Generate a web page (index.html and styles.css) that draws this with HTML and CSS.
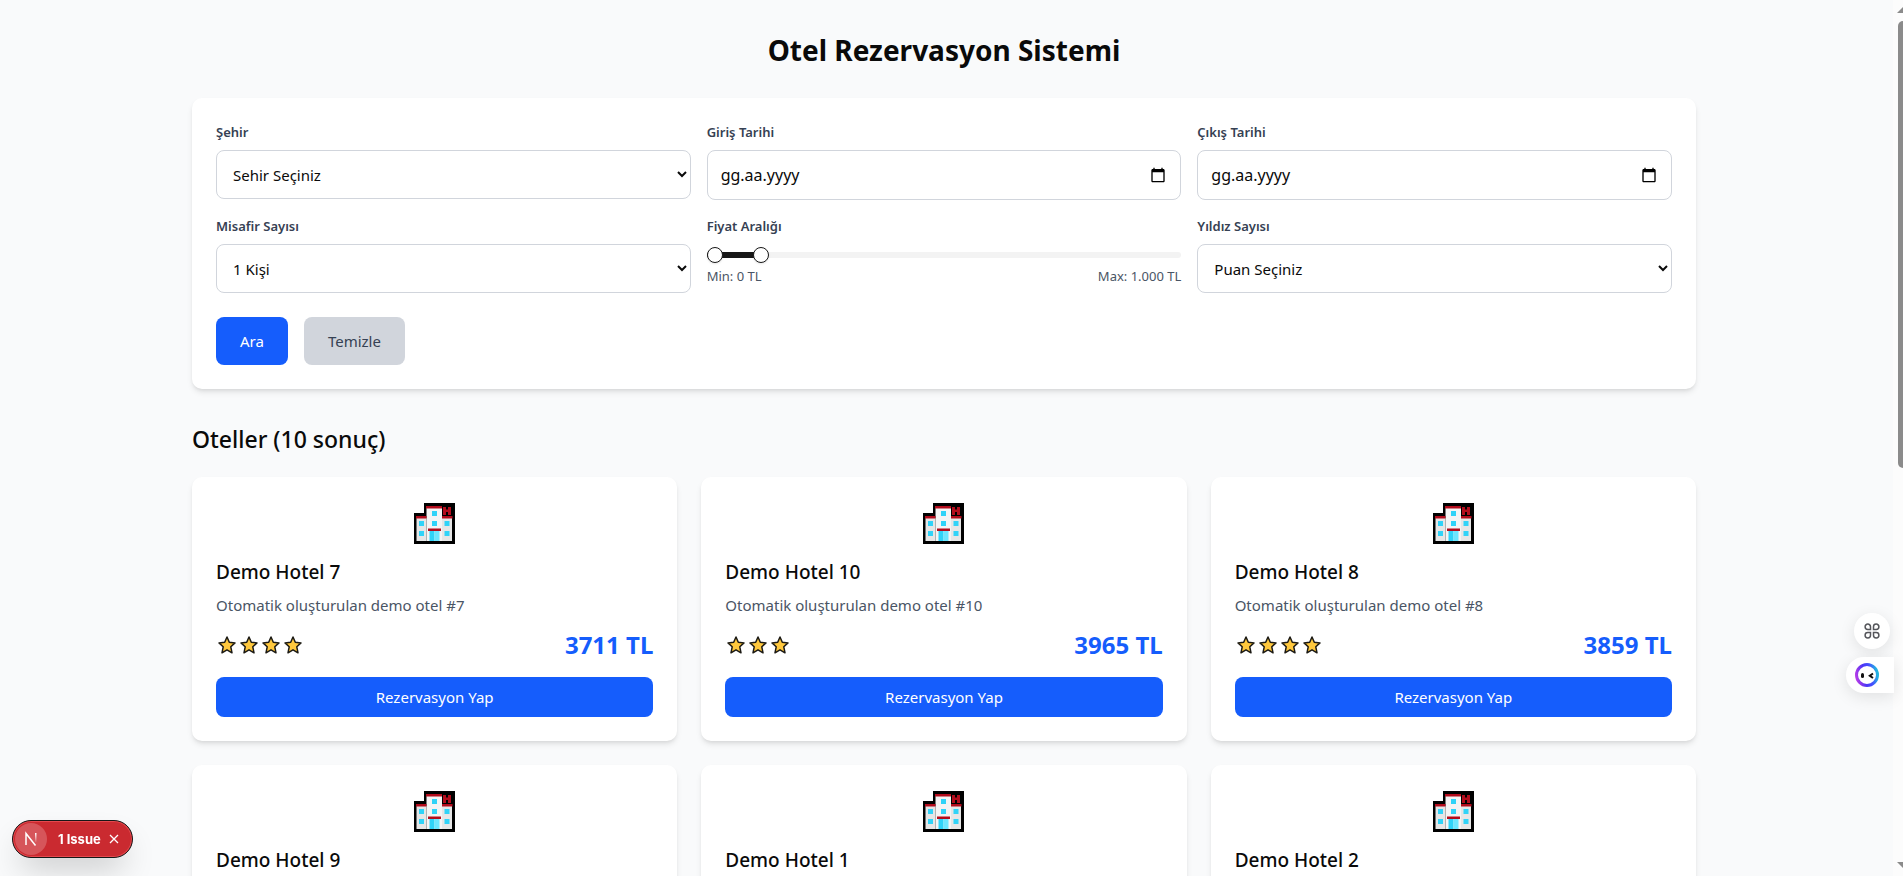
FILE: index.html
```html
<!DOCTYPE html>
<html lang="tr">
<head>
<meta charset="utf-8">
<title>Otel Rezervasyon Sistemi</title>
<link rel="stylesheet" href="styles.css">
</head>
<body>
<svg class="sprite" aria-hidden="true">
  <symbol id="hotel" viewBox="0 0 41 41">
    <path fill="#000" d="M0 10h10V0h31v41H0z"/>
    <path fill="#e6e6e6" d="M2.500 15h10v23h-10zM28 15h10v23H28z"/>
    <path fill="#f4f4f4" d="M12.500 5H28v33H12.500z"/>
    <path fill="#b30c1c" d="M12 3h16v2.500H12zM2 13h10.500v2.500H2zM28 13h10.500v2.500H28zM14 25.500h13v2.500H14zM29 4h3v2.500h2V4h3v8h-3V9h-2v3h-3z"/>
    <path fill="#30d3f8" d="M18 8h5v5h-5zM18 18h5v5h-5zM5 18h5v5H5zM5 28h5v5H5zM30.500 18h5v5h-5zM30.500 28h5v5h-5zM15.500 28h5v10h-5z"/>
    <path fill="#6ce6ff" d="M20.500 28h5v10h-5z"/>
  </symbol>
  <symbol id="star" viewBox="0 0 22 22">
    <path fill="#ffc83d" stroke="#1c1a14" stroke-width="1.500" stroke-linejoin="round" d="M11 3l2.300 5.300 5.700.6-4.200 3.900 1.200 6-5-3-5 3 1.200-6L3 8.900l5.700-.6z"/>
  </symbol>
</svg>
<div class="shell">
<main class="page">
  <h1 class="title">Otel Rezervasyon Sistemi</h1>
  <form class="search">
    <div class="fields">
      <div class="field">
        <label class="label" for="city">Şehir</label>
        <select class="control select" id="city"><option>Sehir Seçiniz</option></select>
      </div>
      <div class="field">
        <label class="label" for="checkin">Giriş Tarihi</label>
        <div class="control date">
          <input class="date-input" id="checkin" type="text" value="gg.aa.yyyy">
          <svg class="calendar" viewBox="0 0 24 24" aria-hidden="true"><path d="M20 3h-1V1h-2v2H7V1H5v2H4c-1.100 0-2 .9-2 2v16c0 1.100.9 2 2 2h16c1.100 0 2-.9 2-2V5c0-1.100-.9-2-2-2zm0 18H4V8h16v13z"/></svg>
        </div>
      </div>
      <div class="field">
        <label class="label" for="checkout">Çıkış Tarihi</label>
        <div class="control date">
          <input class="date-input" id="checkout" type="text" value="gg.aa.yyyy">
          <svg class="calendar" viewBox="0 0 24 24" aria-hidden="true"><path d="M20 3h-1V1h-2v2H7V1H5v2H4c-1.100 0-2 .9-2 2v16c0 1.100.9 2 2 2h16c1.100 0 2-.9 2-2V5c0-1.100-.9-2-2-2zm0 18H4V8h16v13z"/></svg>
        </div>
      </div>
      <div class="field">
        <label class="label" for="guests">Misafir Sayısı</label>
        <select class="control select" id="guests"><option>1 Kişi</option></select>
      </div>
      <div class="field">
        <label class="label" for="price-max">Fiyat Aralığı</label>
        <div class="range">
          <div class="track"><div class="fill"></div></div>
          <input class="slider" type="range" min="0" max="10000" value="0" aria-label="Min">
          <input class="slider" id="price-max" type="range" min="0" max="10000" value="1000">
        </div>
        <div class="limits"><span>Min: 0 TL</span><span>Max: 1.000 TL</span></div>
      </div>
      <div class="field">
        <label class="label" for="stars">Yıldız Sayısı</label>
        <select class="control select" id="stars"><option>Puan Seçiniz</option></select>
      </div>
    </div>
    <div class="actions">
      <button class="button primary" type="button">Ara</button>
      <button class="button muted" type="button">Temizle</button>
    </div>
  </form>
  <h2 class="subtitle">Oteller (10 sonuç)</h2>
  <div class="hotels">
    <article class="card">
      <svg class="hotel-icon"><use href="#hotel"/></svg>
      <h3 class="name">Demo Hotel 7</h3>
      <p class="about">Otomatik oluşturulan demo otel #7</p>
      <div class="meta"><span class="stars"><svg class="star"><use href="#star"/></svg><svg class="star"><use href="#star"/></svg><svg class="star"><use href="#star"/></svg><svg class="star"><use href="#star"/></svg></span><span class="price">3711 TL</span></div>
      <button class="book" type="button">Rezervasyon Yap</button>
    </article>
    <article class="card">
      <svg class="hotel-icon"><use href="#hotel"/></svg>
      <h3 class="name">Demo Hotel 10</h3>
      <p class="about">Otomatik oluşturulan demo otel #10</p>
      <div class="meta"><span class="stars"><svg class="star"><use href="#star"/></svg><svg class="star"><use href="#star"/></svg><svg class="star"><use href="#star"/></svg></span><span class="price">3965 TL</span></div>
      <button class="book" type="button">Rezervasyon Yap</button>
    </article>
    <article class="card">
      <svg class="hotel-icon"><use href="#hotel"/></svg>
      <h3 class="name">Demo Hotel 8</h3>
      <p class="about">Otomatik oluşturulan demo otel #8</p>
      <div class="meta"><span class="stars"><svg class="star"><use href="#star"/></svg><svg class="star"><use href="#star"/></svg><svg class="star"><use href="#star"/></svg><svg class="star"><use href="#star"/></svg></span><span class="price">3859 TL</span></div>
      <button class="book" type="button">Rezervasyon Yap</button>
    </article>
    <article class="card">
      <svg class="hotel-icon"><use href="#hotel"/></svg>
      <h3 class="name">Demo Hotel 9</h3>
    </article>
    <article class="card">
      <svg class="hotel-icon"><use href="#hotel"/></svg>
      <h3 class="name">Demo Hotel 1</h3>
    </article>
    <article class="card">
      <svg class="hotel-icon"><use href="#hotel"/></svg>
      <h3 class="name">Demo Hotel 2</h3>
    </article>
  </div>
</main>
<div class="scrollbar" aria-hidden="true">
  <svg class="arrow" viewBox="0 0 6 8"><path d="M0 7l6-6v6z"/></svg>
  <div class="thumb"></div>
  <svg class="arrow arrow-down" viewBox="0 0 6 8"><path d="M0 1l6 6V1z"/></svg>
</div>
</div>
<div class="issue">
  <button class="issue-logo" type="button" aria-label="Next.js">
    <svg class="issue-n" viewBox="0 0 16 16">
      <defs><linearGradient id="fade" x1="0" y1="0" x2="0" y2="1"><stop offset="0" stop-color="#fff"/><stop offset="1" stop-color="#fff" stop-opacity="0.100"/></linearGradient></defs>
      <path d="M3 14V2.500L12.500 14.500" fill="none" stroke="#fff" stroke-width="1.500"/>
      <path d="M12 2h1.500v9H12z" fill="url(#fade)"/>
    </svg>
  </button>
  <button class="issue-text" type="button">1 Issue</button>
  <button class="issue-close" type="button" aria-label="Kapat"><svg class="issue-x" viewBox="0 0 10 10"><path d="M1 1l8 8M9 1L1 9" fill="none" stroke="#fff" stroke-width="1.300"/></svg></button>
</div>
<div class="dock">
  <button class="dock-apps" type="button" aria-label="Uygulamalar">
    <svg class="apps-icon" viewBox="0 0 16 16" fill="none" stroke="#55565b" stroke-width="1.500"><path d="M6.500 6.500H3.800A2.700 2.700 0 1 1 6.500 3.800zM9.500 6.500V3.800A2.700 2.700 0 1 1 12.200 6.500zM6.500 9.500v2.700A2.700 2.700 0 1 1 3.800 9.500zM9.500 9.500h2.700A2.700 2.700 0 1 1 9.500 12.200z"/></svg>
  </button>
  <button class="dock-bot" type="button" aria-label="Asistan">
    <svg class="bot-icon" viewBox="0 0 24 24">
      <defs><linearGradient id="ring" x1="0" y1="0.700" x2="1" y2="0.500"><stop offset="0" stop-color="#b53be8"/><stop offset="0.400" stop-color="#4b35f5"/><stop offset="0.700" stop-color="#4450ff"/><stop offset="1" stop-color="#23b4e0"/></linearGradient></defs>
      <circle cx="12" cy="12" r="10.500" fill="#fff" stroke="url(#ring)" stroke-width="3"/>
      <rect x="6" y="10" width="3" height="5" rx="1.500" fill="#111"/>
      <path d="M18 10.500l-3.200 2.200L18 15" fill="none" stroke="#111" stroke-width="2"/>
    </svg>
  </button>
</div>
</body>
</html>
```
FILE: styles.css
```css
* { box-sizing: border-box; }
html, body { height: 100%; }
body {
  margin: 0;
  overflow: hidden;
  background: #f9fafb;
  color: #0a0a0a;
  font-family: "Segoe UI", "Noto Sans", sans-serif;
  font-size: 15px;
  line-height: 24px;
}
button, input, select { font: inherit; color: inherit; }
button { border: 0; padding: 0; cursor: pointer; }
h1, h2, h3, p { margin: 0; }
.sprite { position: absolute; width: 0; height: 0; }

.shell { display: flex; gap: 5px; height: 100%; overflow: hidden; }
.page { flex: 1; max-width: 1536px; margin: 0 auto; padding: 32px 16px; }
.title { margin-bottom: 30px; font-size: 28px; line-height: 36px; font-weight: 700; text-align: center; }

.search, .card {
  background: #fff;
  border-radius: 10px;
  padding: 24px;
  box-shadow: 0 4px 6px -1px rgba(0, 0, 0, .1), 0 2px 4px -2px rgba(0, 0, 0, .1);
}
.fields { display: grid; grid-template-columns: repeat(3, 1fr); gap: 16px; align-items: start; }
.field { display: flex; flex-direction: column; }
.label { margin-bottom: 8px; color: #364153; font-size: 13px; line-height: 20px; font-weight: 600; }
.control { width: 100%; border: 1px solid #d1d5dc; border-radius: 8px; background: #fff; }
.select { height: 49px; padding: 12px; }
.date { display: flex; align-items: center; height: 50px; padding: 0 14px 0 13px; }
.date-input { flex: 1; min-width: 0; border: 0; padding: 0; background: transparent; outline: 0; font-size: 16px; }
.calendar { width: 16px; height: 16px; }

.range { display: grid; align-items: center; height: 22px; }
.range > * { grid-area: 1 / 1; }
.track { height: 6px; border-radius: 3px; background: #f3f3f3; overflow: hidden; }
.fill { width: 10%; height: 100%; background: #171717; }
.slider { width: 100%; height: 16px; margin: 0; background: transparent; appearance: none; pointer-events: none; }
.slider::-webkit-slider-thumb {
  appearance: none;
  width: 16px;
  height: 16px;
  border: 1px solid #171717;
  border-radius: 50%;
  background: #fff;
  box-shadow: 0 1px 2px rgba(0, 0, 0, .1);
  pointer-events: auto;
}
.limits { display: flex; justify-content: space-between; color: #4a5565; font-size: 13px; line-height: 20px; }

.actions { display: flex; gap: 16px; margin-top: 24px; }
.button { padding: 12px 24px; border-radius: 8px; }
.primary { background: #155dfc; color: #fff; }
.muted { background: #d1d5dc; color: #364153; }

.subtitle { margin: 34px 0 22px; font-size: 23px; line-height: 32px; font-weight: 500; }
.hotels { display: grid; grid-template-columns: repeat(3, 1fr); gap: 24px; }
.card { display: flex; flex-direction: column; }
.hotel-icon { align-self: center; width: 41px; height: 41px; margin: 2px 0 14px; }
.name { margin-bottom: 7px; font-size: 19px; line-height: 28px; font-weight: 500; }
.about { margin-bottom: 12px; color: #4a5565; }
.meta { display: flex; align-items: center; justify-content: space-between; margin-bottom: 16px; }
.stars { display: flex; }
.star { width: 22px; height: 22px; }
.price { color: #155dfc; font-size: 24px; line-height: 32px; font-weight: 700; }
.book { padding: 8px 16px; border-radius: 8px; background: #155dfc; color: #fff; }

.scrollbar { display: flex; flex-direction: column; align-items: flex-end; width: 10px; background: #fcfcfc; }
.arrow { width: 6px; height: 8px; margin: 6px 0 7px; fill: #8b8b8b; }
.thumb { width: 5px; height: 447px; border-radius: 5px 0 0 5px; background: #8b8b8b; }
.arrow-down { margin-top: auto; }

.issue {
  position: fixed;
  left: 12px;
  bottom: 18px;
  display: flex;
  align-items: center;
  height: 38px;
  padding: 0 13px 0 2px;
  border: 1px solid #171717;
  border-radius: 19px;
  background: #ca2a30;
  color: #fff;
  box-shadow: inset 0 0 0 1px #e5484d, 0 16px 32px -8px rgba(0, 0, 0, .24);
}
.issue-logo { display: flex; align-items: center; justify-content: center; width: 32px; height: 32px; border-radius: 50%; background: #d6555a; }
.issue-n { width: 16px; height: 16px; }
.issue-text { margin: 0 8px 0 11px; background: none; font-family: Inter, sans-serif; font-size: 13px; line-height: 20px; font-weight: 700; }
.issue-close { display: flex; background: none; }
.issue-x { width: 10px; height: 10px; }

.dock { position: fixed; right: 9px; top: 613px; display: flex; flex-direction: column; align-items: flex-end; gap: 8px; }
.dock-apps, .dock-bot { display: flex; align-items: center; height: 36px; background: #fff; box-shadow: 0 4px 16px rgba(0, 0, 0, .1); }
.dock-apps { justify-content: center; width: 36px; margin-right: 4px; border-radius: 50%; }
.dock-bot { width: 48px; padding-left: 9px; border-radius: 18px 0 0 18px; }
.apps-icon { width: 16px; height: 16px; }
.bot-icon { width: 24px; height: 24px; }
```
